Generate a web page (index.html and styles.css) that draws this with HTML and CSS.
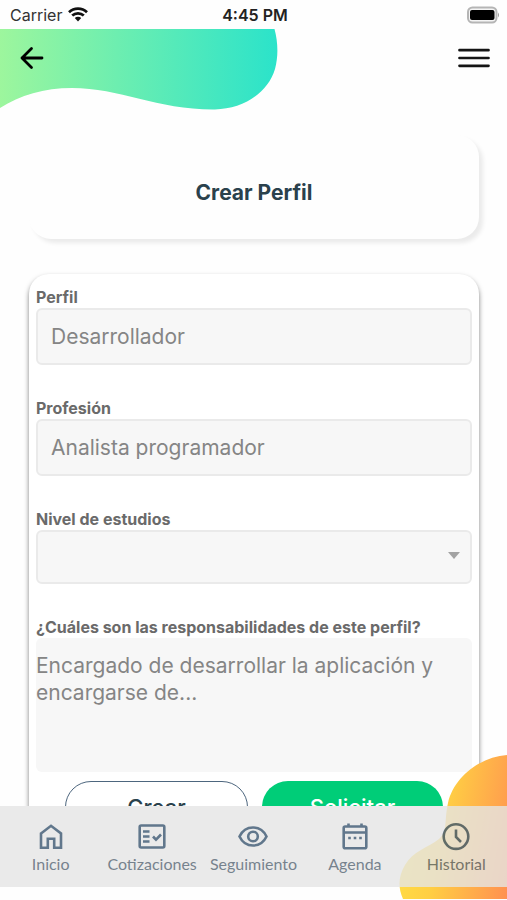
FILE: index.html
```html
<!DOCTYPE html>
<html lang="es">
<head>
<meta charset="utf-8">
<meta name="viewport" content="width=device-width, initial-scale=1">
<title>Crear Perfil</title>
<link rel="stylesheet" href="styles.css">
</head>
<body>
<div class="app">
  <div class="status">
    <div class="carrier">
      <span>Carrier</span>
      <svg class="wifi" viewBox="0 0 20 15" width="20" height="15" aria-hidden="true">
        <path d="M1 5.200a13 13 0 0 1 18 0M4.200 8.600a8.400 8.400 0 0 1 11.600 0" fill="none" stroke="#111" stroke-width="2.700"/>
        <path d="M6.800 11a4.600 4.600 0 0 1 6.400 0L10 14.500z" fill="#111"/>
      </svg>
    </div>
    <span class="time">4:45 PM</span>
    <svg class="battery" viewBox="0 0 34 18" width="34" height="18" aria-hidden="true">
      <rect x="2" y="1.500" width="28.500" height="15" rx="4.500" fill="#f4f4f4" stroke="#b5b5b5" stroke-width="2"/>
      <rect x="4" y="4" width="24.500" height="10" rx="2" fill="#000"/>
      <path d="M32 6.500q2 2.500 0 5z" fill="#999"/>
    </svg>
  </div>

  <header class="header">
    <svg class="wave" viewBox="0 0 278 82" width="278" height="82" aria-hidden="true">
      <defs>
        <linearGradient id="mint" x1="0" x2="1" y1="0" y2="0">
          <stop offset="0" stop-color="#9df69d"/>
          <stop offset="1" stop-color="#2be3ca"/>
        </linearGradient>
      </defs>
      <path d="M0 0H274.500C278 13 278.500 27 275 40C268 64 243 80 215 80.500C158 81 120 59 72 59C44 59 20 66 0 79Z" fill="url(#mint)"/>
    </svg>
    <button class="icon-button" type="button" aria-label="Volver">
      <svg viewBox="0 0 24 24" width="24" height="24" aria-hidden="true">
        <path d="M22 12H2M11.500 2.500L2 12l9.500 9.500" fill="none" stroke="#000" stroke-width="2.800" stroke-linecap="round" stroke-linejoin="round"/>
      </svg>
    </button>
    <button class="icon-button" type="button" aria-label="Menú">
      <svg viewBox="0 0 32 20" width="32" height="20" aria-hidden="true">
        <path d="M1.500 2.200h29M1.500 10h29M1.500 17.800h29" fill="none" stroke="#141414" stroke-width="2.700" stroke-linecap="round"/>
      </svg>
    </button>
  </header>

  <main class="content">
    <div class="title-card"><h1>Crear Perfil</h1></div>
    <form class="form-card">
      <div class="field">
        <label for="perfil">Perfil</label>
        <input id="perfil" type="text" placeholder="Desarrollador">
      </div>
      <div class="field">
        <label for="profesion">Profesión</label>
        <input id="profesion" type="text" placeholder="Analista programador">
      </div>
      <div class="field">
        <label for="nivel">Nivel de estudios</label>
        <div class="select">
          <select id="nivel"><option></option></select>
          <svg class="caret" viewBox="0 0 12 7" width="12" height="7" aria-hidden="true"><path d="M0 0h12L6 7z" fill="#a3a3a3"/></svg>
        </div>
      </div>
      <div class="field">
        <label for="resp">¿Cuáles son las responsabilidades de este perfil?</label>
        <textarea id="resp" placeholder="Encargado de desarrollar la aplicación y encargarse de..."></textarea>
      </div>
      <div class="actions">
        <button class="btn outline" type="button">Crear</button>
        <button class="btn solid" type="button">Solicitar</button>
      </div>
    </form>
  </main>

  <footer class="footer">
    <svg class="blob" viewBox="0 0 108 144" width="108" height="144" aria-hidden="true">
      <defs>
        <linearGradient id="sun" gradientUnits="userSpaceOnUse" x1="0" y1="100" x2="120" y2="122">
          <stop offset="0" stop-color="#ffdc45"/>
          <stop offset="0.300" stop-color="#ffcf43"/>
          <stop offset="1" stop-color="#ff8a52"/>
        </linearGradient>
      </defs>
      <path d="M108 0C82 2 55 21 49 48C45 66 49 76 40 84C28 93 14 96 6 110C-1 122 -1 132 4 144H108Z" fill="url(#sun)"/>
    </svg>
    <nav class="tabs">
      <a href="#inicio">
        <svg viewBox="0 0 32 32" width="32" height="32" aria-hidden="true"><path d="M6 12.500L16 4.800l10 7.700v14.200h-6.800v-8.900h-6.400v8.900H6z"/></svg>
        <span>Inicio</span>
      </a>
      <a href="#cotizaciones">
        <svg viewBox="0 0 32 32" width="32" height="32" aria-hidden="true"><rect x="3.700" y="4.500" width="24.600" height="22" rx="1.500"/><path d="M7 10.500h6.500M7 15.500h6.500M7 20.500h6.500M17 15.500l3 3.200 5-5.200"/></svg>
        <span>Cotizaciones</span>
      </a>
      <a href="#seguimiento">
        <svg viewBox="0 0 32 32" width="32" height="32" aria-hidden="true"><path d="M2.500 15.500C5.200 9.800 10.200 6.500 16 6.500s10.800 3.300 13.500 9c-2.700 5.700-7.700 9-13.500 9s-10.800-3.300-13.500-9z"/><circle cx="16" cy="15.500" r="4.800"/></svg>
        <span>Seguimiento</span>
      </a>
      <a href="#agenda">
        <svg viewBox="0 0 32 32" width="32" height="32" aria-hidden="true"><rect x="4.700" y="5.500" width="22.600" height="21.800" rx="1.500"/><path d="M4.700 11.500h22.600M9.500 2.500v3M22.500 2.500v3"/><path d="M9.200 17h2.600M14.700 17h2.600M20.200 17h2.600"/></svg>
        <span>Agenda</span>
      </a>
      <a href="#historial">
        <svg viewBox="0 0 32 32" width="32" height="32" aria-hidden="true"><circle cx="16" cy="15.600" r="12.300"/><path d="M16 8.500v7.500l5 5"/></svg>
        <span>Historial</span>
      </a>
    </nav>
  </footer>
</div>
</body>
</html>
```
FILE: styles.css
```css
* { box-sizing: border-box; }

body {
  margin: 0;
  background: #fefefe;
  font-family: Inter, "Liberation Sans", sans-serif;
  color: #24363f;
}

.app {
  display: flex;
  flex-direction: column;
  height: 100vh;
  overflow: hidden;
}

.status {
  display: grid;
  grid-template-columns: 1fr auto 1fr;
  align-items: center;
  height: 29px;
  padding: 0 7px 0 10px;
  font-size: 16px;
  color: #333;
  flex: none;
}
.carrier { display: flex; align-items: center; gap: 6px; }
.time { font-weight: 600; color: #222; }
.battery { justify-self: end; }

.header {
  position: relative;
  display: flex;
  justify-content: space-between;
  align-items: center;
  height: 58px;
  padding: 0 17px 0 20px;
  flex: none;
}
.wave { position: absolute; top: 0; left: 0; }
.icon-button {
  position: relative;
  display: flex;
  padding: 0;
  border: 0;
  background: none;
}

.content {
  flex: 1;
  min-height: 0;
  overflow: hidden;
  padding: 48px 28px 0 29px;
}

.title-card {
  display: flex;
  align-items: center;
  justify-content: center;
  height: 104px;
  padding-top: 12px;
  border-radius: 22px;
  background: #fefefe;
  box-shadow: 4px 4px 4px rgba(0, 0, 0, 0.08);
}
h1 { margin: 0; font-size: 21px; line-height: 28px; font-weight: 700; color: #2a414c; }

.form-card {
  margin-top: 35px;
  padding: 14px 7px 24px;
  border-radius: 20px;
  background: #fff;
  box-shadow: 0 3px 5px rgba(0, 0, 0, 0.5);
}

.field { display: flex; flex-direction: column; gap: 2px; margin-bottom: 34px; }
.field:nth-child(4) { margin-bottom: 9px; }
label { font-size: 16px; line-height: 18px; font-weight: 700; color: #6a6a6a; }

input, select, textarea {
  width: 100%;
  border: 2px solid #eaeaea;
  border-radius: 6px;
  background: #f7f7f7;
  font-family: inherit;
  font-size: 21px;
  color: #808080;
}
input { height: 57px; padding: 0 13px; }
.select { position: relative; }
select { display: block; height: 54px; padding: 0 13px; appearance: none; }
.caret { position: absolute; right: 12px; top: 22px; }
textarea {
  display: block;
  height: 134px;
  padding: 14px 0;
  border: 0;
  line-height: 27px;
  resize: none;
}
::placeholder { color: #858585; opacity: 1; }

.actions { display: flex; gap: 14px; padding: 0 29px; }
.btn {
  flex: 1 1 0;
  height: 52px;
  padding: 0;
  border-radius: 26px;
  font-family: inherit;
  font-size: 22px;
  font-weight: 500;
}
.outline { border: 1px solid #4d667e; background: #fff; color: #2a414c; }
.solid { border: 0; background: #00cd78; color: #fff; }

.footer { position: relative; flex: none; padding-bottom: 13px; }
.blob { position: absolute; right: 0; bottom: 1px; }
.tabs {
  position: relative;
  display: grid;
  grid-template-columns: repeat(5, 1fr);
  height: 81px;
  padding-top: 15px;
  background: #e6e6e6;
  opacity: 0.8;
}
.tabs a {
  display: flex;
  flex-direction: column;
  align-items: center;
  font-family: Lato, sans-serif;
  font-size: 16px;
  line-height: 22px;
  color: #556472;
  text-decoration: none;
}
.tabs svg { fill: none; stroke: #3a5670; stroke-width: 2.6; }
```
